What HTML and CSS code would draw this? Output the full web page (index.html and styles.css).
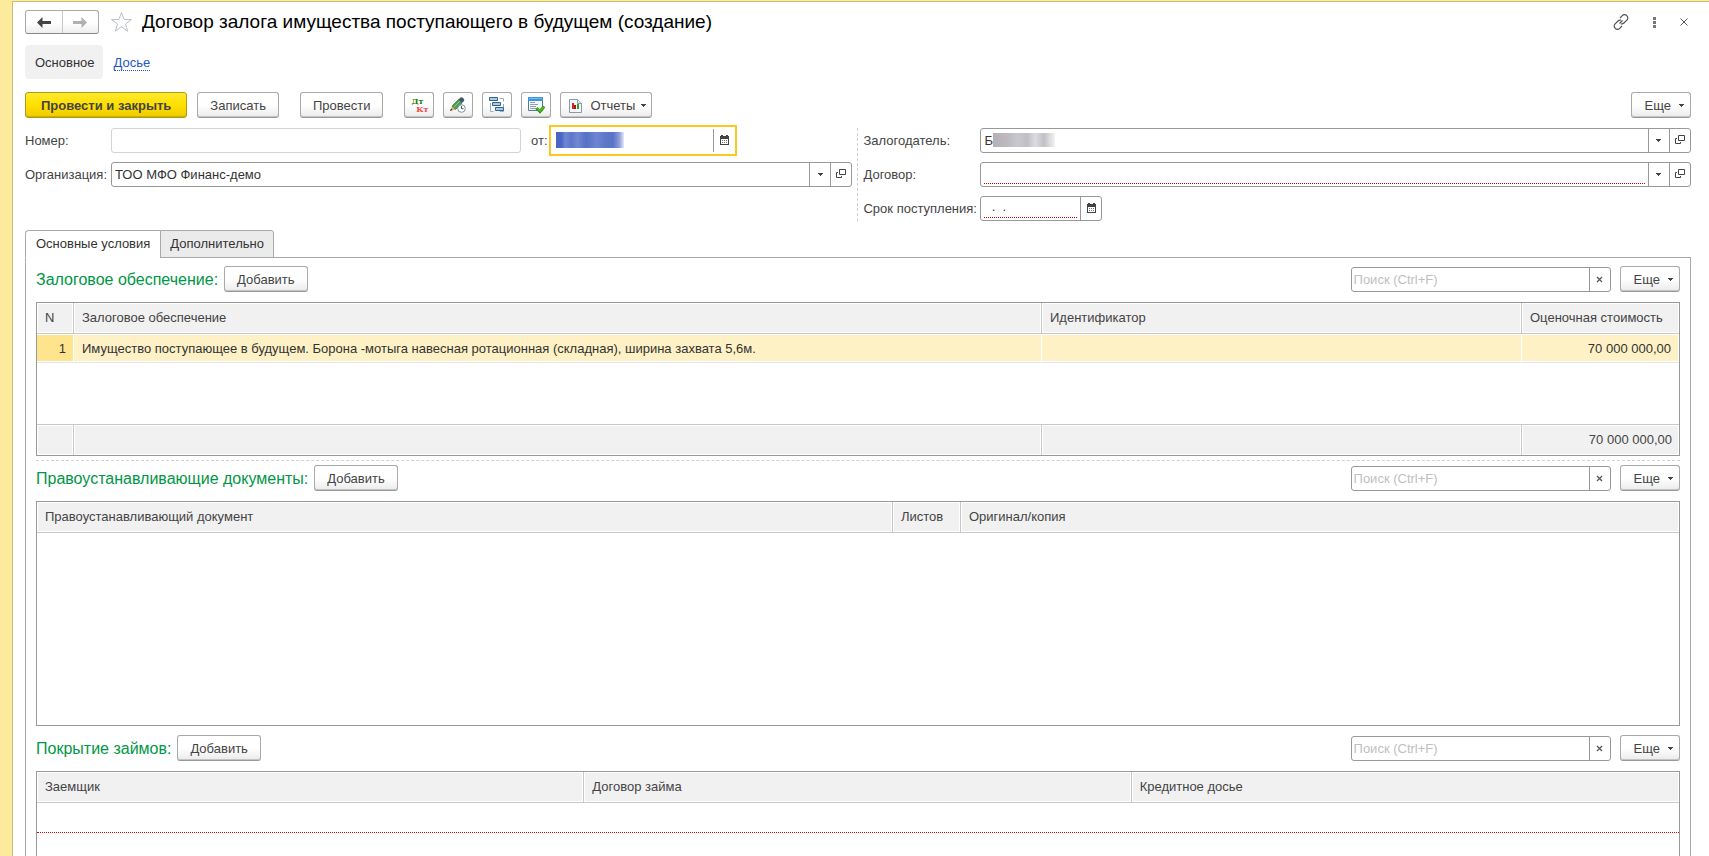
FILE: index.html
```html
<!DOCTYPE html>
<html lang="ru">
<head>
<meta charset="utf-8">
<title>Договор залога имущества поступающего в будущем (создание)</title>
<link rel="stylesheet" href="styles.css">
</head>
<body>
<svg class="defs" aria-hidden="true">
  <symbol id="calendar" viewBox="0 0 9 10"><path d="M0 1h9v9H0z" fill="#444"/><path d="M1 4h7v5H1z" fill="#fff"/><path d="M1 0h1v1H1zM7 0h1v1H7zM2 0h1v2H2zM6 0h1v2H6z" fill="#444"/><path d="M2 5h1v1H2zM4 5h1v1H4zM6 5h1v1H6zM2 7h1v1H2zM4 7h1v1H4zM6 7h1v1H6z" fill="#777"/></symbol>
  <symbol id="open" viewBox="0 0 10 10"><path d="M3.500.500h6v5h-6zM2 3.500H.500v5h5V7" fill="none" stroke="#444"/></symbol>
  <symbol id="caret" viewBox="0 0 5 3"><path d="M0 0h5v1H4v1H3v1H2V2H1V1H0z" fill="#444"/></symbol>
  <symbol id="cross" viewBox="0 0 7 7"><path d="M1 1l5 5M6 1L1 6" stroke="#555" stroke-width="1.200"/></symbol>
</svg>
<main class="window">
  <header class="titlebar">
    <div class="history">
      <button type="button" aria-label="Назад"><svg width="15" height="11" viewBox="0 0 15 11"><path d="M0 5.500L5.500 0v4H14v3H5.500v4z" fill="#444"/></svg></button>
      <button type="button" aria-label="Вперед" disabled><svg width="15" height="11" viewBox="0 0 15 11"><path d="M14 5.500L8.500 0v4H0v3h8.500v4z" fill="#b0b0b0"/></svg></button>
    </div>
    <button type="button" class="plain" aria-label="В избранное"><svg width="23" height="22" viewBox="0 0 23 22"><path d="M11.500 1.500l2.600 7h7.400l-6 4.500 2.200 7.200-6.200-4.400-6.200 4.400 2.200-7.200-6-4.500h7.400z" fill="#fff" stroke="#b8bfc6"/></svg></button>
    <h1>Договор залога имущества поступающего в будущем (создание)</h1>
    <div class="window-tools">
      <button type="button" class="plain" aria-label="Ссылка"><svg width="16" height="16" viewBox="0 0 16 16"><path d="M7 4l2.300-2.300a3 3 0 0 1 4.500 0 3 3 0 0 1 0 4.500L11 9a3 3 0 0 1-3 .8M9 12l-2.300 2.300a3 3 0 0 1-4.500 0 3 3 0 0 1 0-4.500L5 7a3 3 0 0 1 3-.8M6.500 9.500l3-3" fill="none" stroke="#555" stroke-width="1.200"/></svg></button>
      <button type="button" class="plain" aria-label="Меню"><svg width="3" height="11" viewBox="0 0 3 11"><path d="M0 0h3v3H0zM0 4h3v3H0zM0 8h3v3H0z" fill="#777"/></svg></button>
      <button type="button" class="plain" aria-label="Закрыть"><svg width="8" height="8" viewBox="0 0 8 8"><path d="M.5.500l7 7m0-7l-7 7" stroke="#555"/></svg></button>
    </div>
  </header>

  <nav class="pages"><span class="current">Основное</span><a href="#dossier">Досье</a></nav>

  <div class="toolbar">
    <button type="button" class="btn primary">Провести и закрыть</button>
    <button type="button" class="btn">Записать</button>
    <button type="button" class="btn post">Провести</button>
    <div class="icon-group">
      <button type="button" class="btn icon dtkt" aria-label="Дт Кт"><span class="dt">Дт</span><span class="kt">Кт</span></button>
      <button type="button" class="btn icon" aria-label="Изменить"><svg width="16" height="16" viewBox="0 0 16 16"><path d="M0 14l2-5 3.500 3.500z" fill="#dcae78"/><path d="M0 14l1-2.500L2.500 13z" fill="#333"/><path d="M2 9l6.500-6.500L12 6l-6.500 6.500z" fill="#4e9f52" stroke="#2f7438" stroke-width=".7"/><path d="M3.500 10.500L10 4" stroke="#89c98a"/><path d="M8.500 2.500L10.500.500Q12-.3 13.500 1.500T13.500 4.500L12 6z" fill="#425866"/><circle cx="11.500" cy="11.500" r="3.800" fill="#fff" stroke="#7891a6"/><path d="M11.500 9v2.700h2" fill="none" stroke="#456"/></svg></button>
      <button type="button" class="btn icon" aria-label="Структура"><svg width="16" height="16" viewBox="0 0 16 16"><path d="M10.500 1.500h4v3M1.500 6v8.500h3M11 14.500h3.500V7" fill="none" stroke="#8fb0ca"/><g fill="#a9c9e0" stroke="#34648b"><path d="M.5.500h8v3h-8zM3.500 5.500h8v3h-8zM6.500 10.500h8v3h-8z"/></g></svg></button>
      <button type="button" class="btn icon" aria-label="Проверить"><svg width="17" height="17" viewBox="0 0 17 17"><path d="M.5.500h14v13H.500z" fill="#f4f8fb" stroke="#54789b"/><path d="M0 0h15v4H0z" fill="#3d94df"/><path d="M1 1h13v1H1z" fill="#75bcf2"/><path d="M2 5.500h5M2 7.500h8M2 9.500h6M2 11.500h6" stroke="#8ba1b5"/><path d="M8.500 11l3.500 3.500L16 9.500" fill="none" stroke="#2e8d14" stroke-width="3"/><path d="M9 11l3 3 3.500-4" fill="none" stroke="#58c526" stroke-width="1.400"/></svg></button>
    </div>
    <button type="button" class="btn reports"><svg width="13" height="14" viewBox="0 0 13 14"><path d="M.5.500h8l4 4v9H.500z" fill="#f5f8fa" stroke="#879aab"/><path d="M8.500.500v4h4" fill="#dfe7ee" stroke="#879aab"/><path d="M3 4h2v6H3z" fill="#d22"/><path d="M5 6h2v4H5z" fill="#b11"/><path d="M8 5h2v5H8z" fill="#29a329"/></svg>Отчеты<svg class="caret"><use href="#caret"/></svg></button>
    <button type="button" class="btn more">Еще<svg class="caret"><use href="#caret"/></svg></button>
  </div>

  <div class="form">
    <div class="form-col">
      <div class="row">
        <label for="num">Номер:</label>
        <div class="field muted number"><input id="num" type="text"></div>
        <label class="from" for="date">от:</label>
        <div class="field focus"><div class="censored"><input id="date" type="text"><span class="selection"></span></div><button type="button" class="cal" aria-label="Календарь"><svg width="9" height="10"><use href="#calendar"/></svg></button></div>
      </div>
      <div class="row">
        <label for="org">Организация:</label>
        <div class="field"><input id="org" type="text" value="ТОО МФО Финанс-демо"><button type="button" aria-label="Выбрать"><svg class="caret"><use href="#caret"/></svg></button><button type="button" aria-label="Открыть"><svg width="10" height="10"><use href="#open"/></svg></button></div>
      </div>
    </div>
    <div class="form-col right">
      <div class="row">
        <label for="pledger">Залогодатель:</label>
        <div class="field"><div class="censored"><input id="pledger" type="text" value="Б"><span class="smudge"></span></div><button type="button" aria-label="Выбрать"><svg class="caret"><use href="#caret"/></svg></button><button type="button" aria-label="Открыть"><svg width="10" height="10"><use href="#open"/></svg></button></div>
      </div>
      <div class="row">
        <label for="contract">Договор:</label>
        <div class="field required"><input id="contract" type="text"><button type="button" aria-label="Выбрать"><svg class="caret"><use href="#caret"/></svg></button><button type="button" aria-label="Открыть"><svg width="10" height="10"><use href="#open"/></svg></button></div>
      </div>
      <div class="row">
        <label for="term">Срок поступления:</label>
        <div class="field required term"><input id="term" type="text" value="  .  ."><button type="button" aria-label="Календарь"><svg width="9" height="10"><use href="#calendar"/></svg></button></div>
      </div>
    </div>
  </div>

  <div class="tabs" role="tablist">
    <button type="button" role="tab" aria-selected="true">Основные условия</button>
    <button type="button" role="tab" aria-selected="false">Дополнительно</button>
  </div>

  <div class="panel">
    <section>
      <div class="section-head">
        <h2>Залоговое обеспечение:</h2><button type="button" class="btn">Добавить</button>
        <div class="field search"><input type="text" placeholder="Поиск (Ctrl+F)" aria-label="Поиск"><button type="button" aria-label="Очистить"><svg width="7" height="7"><use href="#cross"/></svg></button></div>
        <button type="button" class="btn more">Еще<svg class="caret"><use href="#caret"/></svg></button>
      </div>
      <div class="grid">
        <table>
          <colgroup><col class="c-n"><col><col class="c-id"><col class="c-cost"></colgroup>
          <thead><tr><th>N</th><th>Залоговое обеспечение</th><th>Идентификатор</th><th>Оценочная стоимость</th></tr></thead>
          <tbody>
            <tr class="selected"><td class="num">1</td><td>Имущество поступающее в будущем. Борона -мотыга навесная ротационная (складная), ширина захвата 5,6м.</td><td></td><td class="num">70 000 000,00</td></tr>
            <tr class="space"><td colspan="4"></td></tr>
          </tbody>
          <tfoot><tr><td></td><td></td><td></td><td class="num">70 000 000,00</td></tr></tfoot>
        </table>
      </div>
    </section>
    <section class="split">
      <div class="section-head">
        <h2>Правоустанавливающие документы:</h2><button type="button" class="btn">Добавить</button>
        <div class="field search"><input type="text" placeholder="Поиск (Ctrl+F)" aria-label="Поиск"><button type="button" aria-label="Очистить"><svg width="7" height="7"><use href="#cross"/></svg></button></div>
        <button type="button" class="btn more">Еще<svg class="caret"><use href="#caret"/></svg></button>
      </div>
      <div class="grid documents">
        <table>
          <colgroup><col><col class="c-sheets"><col class="c-copy"></colgroup>
          <thead><tr><th>Правоустанавливающий документ</th><th>Листов</th><th>Оригинал/копия</th></tr></thead>
        </table>
      </div>
    </section>
    <section>
      <div class="section-head">
        <h2>Покрытие займов:</h2><button type="button" class="btn">Добавить</button>
        <div class="field search"><input type="text" placeholder="Поиск (Ctrl+F)" aria-label="Поиск"><button type="button" aria-label="Очистить"><svg width="7" height="7"><use href="#cross"/></svg></button></div>
        <button type="button" class="btn more">Еще<svg class="caret"><use href="#caret"/></svg></button>
      </div>
      <div class="grid loans">
        <table>
          <thead><tr><th>Заемщик</th><th>Договор займа</th><th>Кредитное досье</th></tr></thead>
          <tbody><tr class="blank"><td colspan="3"></td></tr></tbody>
        </table>
      </div>
    </section>
  </div>
</main>
</body>
</html>
```
FILE: styles.css
```css
* { box-sizing: border-box; }
body {
  margin: 0;
  height: 100vh;
  overflow: hidden;
  background: #fceb9c;
  font: 13px/16px "Liberation Sans", Arial, sans-serif;
  color: #444;
}
button, input { font: inherit; color: inherit; }
button { display: flex; align-items: center; justify-content: center; padding: 0; border: 0; background: none; }
svg { display: block; flex: none; }
.defs { position: absolute; width: 0; height: 0; }
.caret { width: 5px; height: 3px; }

.window {
  display: flex;
  flex-direction: column;
  height: calc(100vh - 1px);
  margin: 1px 0 0 12px;
  padding: 8px 18px 0 12px;
  border-top: 1px solid #cabd72;
  border-left: 1px solid #cabd72;
  background: #fff;
  overflow: hidden;
}
.window > * { flex: none; }

.titlebar { display: flex; align-items: center; height: 24px; }
.history { display: flex; height: 24px; margin-right: 11px; border: 1px solid #aaa; border-bottom-color: #888; border-radius: 3px; background: linear-gradient(#fff 50%, #eee); }
.history button { width: 36px; }
.history button + button { border-left: 1px solid #c8c8c8; }
h1 { margin: 0 0 0 9px; font-size: 19px; line-height: 24px; font-weight: 400; color: #000; }
.window-tools { display: flex; align-items: center; gap: 24px; margin-left: auto; padding-right: 3px; }

.pages { display: flex; align-items: center; gap: 11px; height: 34px; margin-top: 11px; }
.current { padding: 10px 8px 8px 10px; border-radius: 4px; background: #f1f1f1; color: #333; }
.pages a { padding-top: 2px; color: #2457c0; text-decoration: none; border-bottom: 1px dotted #2457c0; line-height: 14px; }

.toolbar { display: flex; gap: 10px; height: 26px; margin-top: 13px; }
.btn { height: 26px; padding: 1px 12px 0; border: 1px solid #aaa; border-bottom-color: #999; border-radius: 3px; background: linear-gradient(#fff 50%, #ebebeb); box-shadow: inset 0 -1px #c4c4c4; white-space: nowrap; }
.primary { padding: 1px 15px 0; border-color: #b09a10; background: linear-gradient(#ffe92e, #ffe000 50%, #edcb00); box-shadow: inset 0 -1px #cdb000; font-weight: 700; }
.post { margin-left: 11px; }
.icon-group { display: flex; gap: 9px; margin: 0 -1px 0 11px; }
.btn.icon { width: 30px; padding: 0; }
.btn.dtkt { flex-direction: column; font: 700 8px/8px "DejaVu Serif", serif; }
.dt { align-self: flex-start; padding-left: 6px; color: #227a00; }
.kt { align-self: flex-end; padding-right: 5px; color: #f44; }
.reports { gap: 8px; padding: 1px 5px 0 8px; }
.reports .caret { margin-left: -2px; }
.more { gap: 8px; padding: 1px 6px 0 13px; }
.toolbar .more { margin-left: auto; }

.form { display: grid; grid-template-columns: minmax(0, 827fr) minmax(0, 833fr); gap: 5px; margin-top: 10px; }
.form-col { display: flex; flex-direction: column; gap: 9px; }
.right { padding-left: 5px; border-left: 1px dashed #d0d0d0; }
.row { display: flex; align-items: center; height: 25px; }
.row label { flex: none; width: 86px; }
.right .row label { width: 117px; }
.row .from { width: 18px; margin-left: 10px; }
.field { display: flex; flex: 1; min-width: 0; height: 25px; border: 1px solid #999; border-radius: 3px; background: #fff; }
.field input { flex: 1; min-width: 0; width: 100%; padding: 0 3px; border: 0; outline: 0; background: none; color: #333; }
.field button { flex: none; width: 21px; padding-bottom: 1px; border-left: 1px solid #999; }
.muted { border-color: #d4d4d4; }
.row .number { flex: 0 1 410px; }
.row .focus { flex: 0 0 188px; height: 31px; padding: 2px 0; border: 2px solid #f9c922; border-radius: 0; }
.focus .cal { width: 22px; }
.censored { position: relative; display: flex; flex: 1; min-width: 0; }
.selection { position: absolute; left: 5px; top: 3px; width: 68px; height: 16px; background: linear-gradient(90deg, #4a66c4 0 8%, #7088d2 14%, #5c76ca 22%, #7188d2 32%, #5470c6 44%, #6f85d1 60%, #5d77ca 72%, #5874c8 84%, #8b9dd9 93%, #e4e8f6); }
.smudge { position: absolute; left: 12px; top: 4px; width: 62px; height: 14px; background: linear-gradient(90deg, #b4b2b6, #bcb8bd 20%, #c9c9cd 40%, #c0bec4 55%, #dcdce0 68%, #c2c0c6 82%, #f2f2f2); }
.required input { margin: 0 3px 2px; padding: 0; border-bottom: 1px dotted #c00; white-space: pre; }
.row .term { flex: 0 0 122px; }

.tabs { display: flex; height: 28px; margin-top: 9px; margin-bottom: -1px; z-index: 1; }
.tabs button { padding: 0 9px; border: 1px solid #aaa; background: #ebebeb; color: #333; }
.tabs button:first-child { padding: 0 10px; border-right: 0; border-bottom-color: #fff; border-radius: 4px 0 0 0; background: #fff; }
.tabs button + button { border-radius: 0 3px 0 0; }

.panel { padding: 8px 10px; border: 1px solid #aaa; }
.section-head { display: flex; align-items: flex-end; height: 26px; margin-bottom: 10px; }
section + section { margin-top: 9px; }
section.split { margin-top: 4px; padding-top: 4px; border-top: 1px dashed #d0d0d0; }
h2 { margin: 0 6px 0 0; font-size: 16px; line-height: 24px; font-weight: 400; color: #009646; }
.section-head .search { flex: 0 0 260px; margin: 0 9px 0 auto; }
.search input { padding: 0 2px; }
.search input::placeholder { color: #c0c0c0; opacity: 1; }

.grid { border: 1px solid #999; }
.documents { height: 225px; }
.loans { height: 225px; }
table { width: 100%; table-layout: fixed; border-collapse: separate; border-spacing: 0; }
th, td { height: 31px; padding: 0 8px; text-align: left; font-weight: 400; white-space: nowrap; }
th, tfoot td { background: #f1f1f1; box-shadow: inset 0 0 0 1px #fff; border-right: 1px solid #c8c8c8; }
th { border-bottom: 1px solid #c8c8c8; }
tfoot td { border-top: 1px solid #c8c8c8; }
th:last-child, td:last-child { border-right: 0; }
td.num { padding-right: 7px; text-align: right; }
.c-n { width: 37px; }
.c-id { width: 480px; }
.c-cost { width: 157px; }
.c-sheets { width: 68px; }
.c-copy { width: 718px; }
.selected td { height: 29px; padding-top: 1px; background: #fef1c5; color: #333; border-right: 1px solid #fff; border-bottom: 1px solid #e4e4e4; box-shadow: inset 0 1px #fff, inset 0 -1px #fff; }
.selected td:first-child { background: #fee48c; }
.space td { height: 61px; }
.blank td { height: 30px; border-bottom: 1px dotted #e00; }
```
